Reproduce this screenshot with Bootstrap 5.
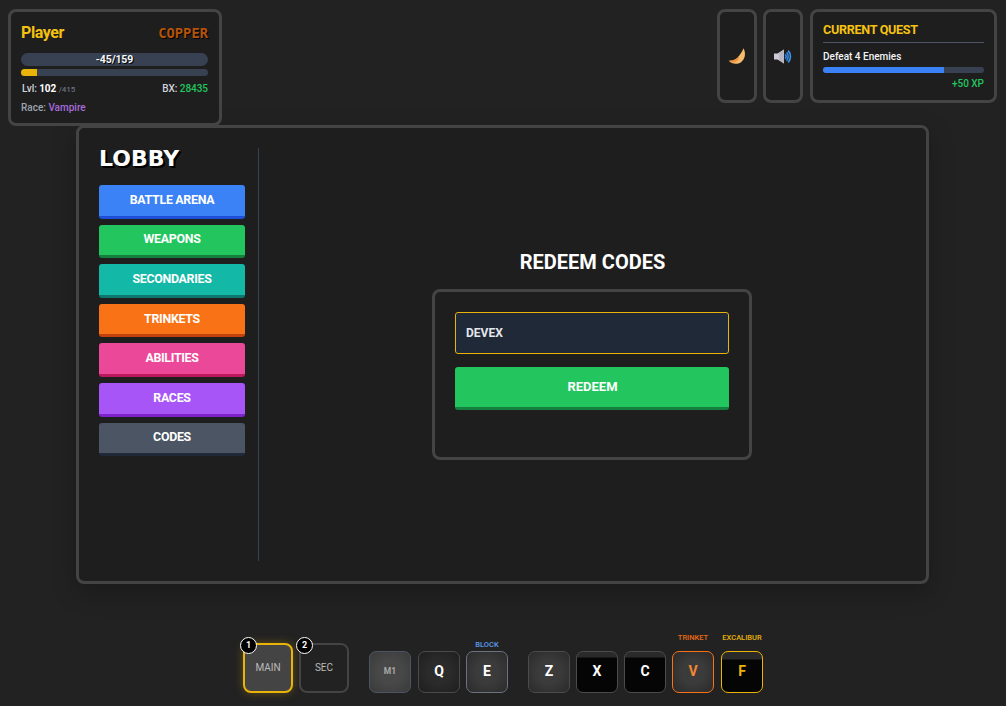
<!DOCTYPE html>
<html lang="en">
<head>
<meta charset="utf-8">
<link href="https://cdn.jsdelivr.net/npm/bootstrap@5.3.0/dist/css/bootstrap.min.css" rel="stylesheet">
<style>
html,body{height:100%;}
body{background:#222;font-family:Roboto,"Liberation Sans",sans-serif;color:#fff;overflow:hidden;}
.stage{width:1006px;height:706px;padding:9px 9px 13px 8px;}
.panel{background:#1e1e1e;border:3px solid #444;border-radius:8px;}
.topbar{height:116px;position:relative;z-index:2;}
.player{width:214px;height:117px;padding:9px 11px 9px 10px;}
.pname{font-size:16px;font-weight:700;letter-spacing:-.4px;color:#f5c211;line-height:24px;}
.rank{font-family:"DejaVu Sans Mono",monospace;font-size:13.8px;font-weight:700;color:#b45309;text-shadow:1px 1px 0 #000;line-height:16px;}
.hp{height:13px;background:#374151;border-radius:7px;font-size:10.5px;font-weight:700;letter-spacing:-.1px;line-height:13px;text-align:center;color:#f9fafb;margin-top:8px;text-shadow:1px 1px 0 #000;}
.xp{height:7px;background:#374151;border-radius:4px;margin-top:3px;overflow:hidden;}
.xp-fill{height:100%;background:#eab308;}
.stat{font-size:10px;font-weight:500;color:#d1d5db;line-height:12px;margin-top:7px;padding-left:1px;letter-spacing:-.05px;}
.stat b{color:#fff;font-weight:700;}
.stat small{font-size:8px;color:#6b7280;}
.bx{color:#22c55e;font-weight:500;}
.race{font-size:10px;font-weight:500;color:#9ca3af;line-height:12px;margin-top:6px;}
.race span{color:#a66bdc;}
.iconbox{width:40px;height:94px;}
.quest{width:187px;height:94px;padding:9px 10px;margin-left:1px;}
.qtitle{font-size:12.6px;font-weight:700;letter-spacing:-.3px;color:#f5c211;line-height:17px;padding-bottom:4px;border-bottom:1px solid #4b5563;}
.qtext{font-size:10px;font-weight:500;color:#f3f4f6;line-height:12px;margin-top:8px;}
.qbar{height:6px;background:#374151;border-radius:3px;margin-top:4px;overflow:hidden;}
.qfill{height:100%;background:#3b82f6;}
.qxp{font-size:10px;font-weight:500;color:#22c55e;line-height:12px;margin-top:5px;text-align:right;}
.mainpanel{width:853px;height:459px;margin:0 0 0 68px;padding:20px 20px;box-shadow:0 8px 24px rgba(0,0,0,.25);}
.side{width:160px;height:413px;border-right:1px solid #374151;padding-right:13px;flex:none;}
.lobby{font-family:"DejaVu Sans",sans-serif;font-weight:700;font-size:22px;line-height:20px;letter-spacing:0;color:#fff;text-shadow:1px 1px 0 #000,2px 2px 0 #000;margin:0 0 17px 0;padding-top:1px;height:20px;}
.menu-btn{display:block;width:146px;height:33.6px;border:0;border-radius:3px;border-bottom:3px solid;font-family:inherit;font-size:12.4px;font-weight:700;letter-spacing:-.3px;color:#fff;padding:0 0 .5px;text-transform:uppercase;}
.c-blue{background:#3b82f6;border-color:#1d4ed8;}
.c-green{background:#22c55e;border-color:#15803d;}
.c-teal{background:#14b8a6;border-color:#0f766e;}
.c-orange{background:#f97316;border-color:#c2410c;}
.c-pink{background:#ec4899;border-color:#be185d;}
.c-purple{background:#a855f7;border-color:#7e22ce;}
.c-gray{background:#4b5563;border-color:#1f2937;}
.mid{padding-top:102px;padding-left:18px;}
.rtitle{font-size:20px;font-weight:700;line-height:24px;margin:0 0 15px 0;padding-left:2px;color:#fff;}
.rcard{width:320px;height:171px;padding:20px;}
.rinput{display:block;width:274px;height:42px;background:#1f2937;border:1px solid #eab308;border-radius:3px;color:#e5e7eb;font-family:inherit;font-size:12px;font-weight:700;padding:0 10px 0 10.5px;outline:0;}
.rbtn{display:block;width:274px;height:43px;margin-top:13px;background:#22c55e;border:0;border-bottom:3px solid #15803d;border-radius:3px;color:#fff;font-family:inherit;font-size:13px;font-weight:700;padding:0 0 0 2px;}
.hotbar{margin:59px 0 0 235px;height:50px;}
.slot{width:50px;height:50px;background:#222;border:2px solid #444;border-radius:8px;font-size:10px;color:#bbb;position:relative;padding-bottom:2px;}
.slot.on{background:#444;border-color:#eab308;box-shadow:0 0 10px rgba(234,179,8,.3);}
.num{position:absolute;left:-5px;top:-8px;width:17px;height:17px;background:#000;border:1.5px solid #fff;border-radius:50%;font-size:9px;font-weight:700;line-height:14px;text-align:center;color:#fff;}
.key{width:42px;height:42px;border:1px solid #4b4b4b;border-radius:7px;background:radial-gradient(circle,#3b3b3b 40%,#2a2a2a 100%);font-size:14px;font-weight:700;color:#fff;position:relative;flex:none;padding-bottom:1px;}
.key.m1{background:radial-gradient(circle,#484848 40%,#3a3a3a 100%);border-color:#4b5563;font-size:8.5px;color:#aaa;margin-right:1px;}
.key.q{background:radial-gradient(circle,#2b2b2b 40%,#1e1e1e 100%);}
.key.e{border-color:#6b7280;}
.key.dark{background:linear-gradient(#2a2a2a 5px,#050505 6px);}
.key.v{border-color:#f97316;color:#f58633;margin-right:1px;}
.key.f{border-color:#eab308;color:#eab308;background:linear-gradient(#2a2a2a 7px,#050505 8px);}
.klabel{position:absolute;left:50%;transform:translateX(-50%);top:-12px;font-size:7.5px;font-weight:500;white-space:nowrap;line-height:10px;}
.klabel.up{top:-19px;}
.keygrp{gap:6px;margin-left:20px;}
</style>
</head>
<body>
<div class="stage">
  <div class="topbar d-flex align-items-start">
    <div class="panel player">
      <div class="d-flex justify-content-between align-items-center"><span class="pname">Player</span><span class="rank">COPPER</span></div>
      <div class="hp">-45/159</div>
      <div class="xp"><div class="xp-fill" style="width:8.5%"></div></div>
      <div class="stat d-flex justify-content-between"><span>Lvl: <b>102</b> <small>/415</small></span><span>BX: <span class="bx">28435</span></span></div>
      <div class="race">Race: <span>Vampire</span></div>
    </div>
    <div class="d-flex ms-auto" style="gap:6px">
      <div class="panel iconbox d-flex align-items-center justify-content-center">
        <svg width="18" height="17" viewBox="0 0 18 17"><path d="M15.5 .3C18 5 17.5 11 13 14.2 9 16.8 3.5 16 .8 12.8 5 13 9 11 11 8 12.8 5.5 14.5 3 15.5 .3Z" fill="#f7bb6b"/><path d="M.8 12.8C5 13 9 11 11 8 11.6 11.5 8 14.6 4.5 14.6 3 14.4 1.8 13.8.8 12.8Z" fill="#ee9440"/></svg>
      </div>
      <div class="panel iconbox d-flex align-items-center justify-content-center">
        <svg width="18" height="15" viewBox="0 0 18 15"><path d="M0 4.5H3.5L10 .5V14.5L3.5 10.5H0Z" fill="#cfcbd6"/><path d="M5 4V11L10 14.5V.5Z" fill="#b9b5c2"/><path d="M11.2 5.2C12.2 6.4 12.2 8.6 11.2 9.8" fill="none" stroke="#2f80e8" stroke-width="1.6"/><path d="M12.6 3.4C14.6 5.6 14.6 9.4 12.6 11.6" fill="none" stroke="#2f8ae8" stroke-width="1.6"/><path d="M14.2 1.6C17.2 4.8 17.2 10.2 14.2 13.4" fill="none" stroke="#3b98ea" stroke-width="1.6"/></svg>
      </div>
      <div class="panel quest">
        <div class="qtitle">CURRENT QUEST</div>
        <div class="qtext">Defeat 4 Enemies</div>
        <div class="qbar"><div class="qfill" style="width:75%"></div></div>
        <div class="qxp">+50 XP</div>
      </div>
    </div>
  </div>
  <div class="panel mainpanel d-flex">
    <div class="side">
      <h1 class="lobby">LOBBY</h1>
      <div class="d-flex flex-column" style="gap:6px">
        <button class="menu-btn c-blue">Battle Arena</button>
        <button class="menu-btn c-green">Weapons</button>
        <button class="menu-btn c-teal">Secondaries</button>
        <button class="menu-btn c-orange">Trinkets</button>
        <button class="menu-btn c-pink">Abilities</button>
        <button class="menu-btn c-purple">Races</button>
        <button class="menu-btn c-gray">Codes</button>
      </div>
    </div>
    <div class="mid flex-grow-1 d-flex flex-column align-items-center">
      <h2 class="rtitle">REDEEM CODES</h2>
      <div class="panel rcard">
        <input class="rinput" value="DEVEX">
        <button class="rbtn">REDEEM</button>
      </div>
    </div>
  </div>
  <div class="hotbar d-flex align-items-end">
    <div class="d-flex" style="gap:6px">
      <div class="slot on d-flex align-items-center justify-content-center"><span class="num">1</span>MAIN</div>
      <div class="slot d-flex align-items-center justify-content-center"><span class="num">2</span>SEC</div>
    </div>
    <div class="d-flex keygrp">
      <div class="key m1 d-flex align-items-center justify-content-center">M1</div>
      <div class="key q d-flex align-items-center justify-content-center">Q</div>
      <div class="key e d-flex align-items-center justify-content-center"><span class="klabel" style="color:#5b9bf0">BLOCK</span>E</div>
    </div>
    <div class="d-flex keygrp">
      <div class="key d-flex align-items-center justify-content-center">Z</div>
      <div class="key dark d-flex align-items-center justify-content-center">X</div>
      <div class="key dark d-flex align-items-center justify-content-center">C</div>
      <div class="key v d-flex align-items-center justify-content-center"><span class="klabel up" style="color:#ea6a12">TRINKET</span>V</div>
      <div class="key f d-flex align-items-center justify-content-center"><span class="klabel up" style="color:#eab308">EXCALIBUR</span>F</div>
    </div>
  </div>
</div>
</body>
</html>
